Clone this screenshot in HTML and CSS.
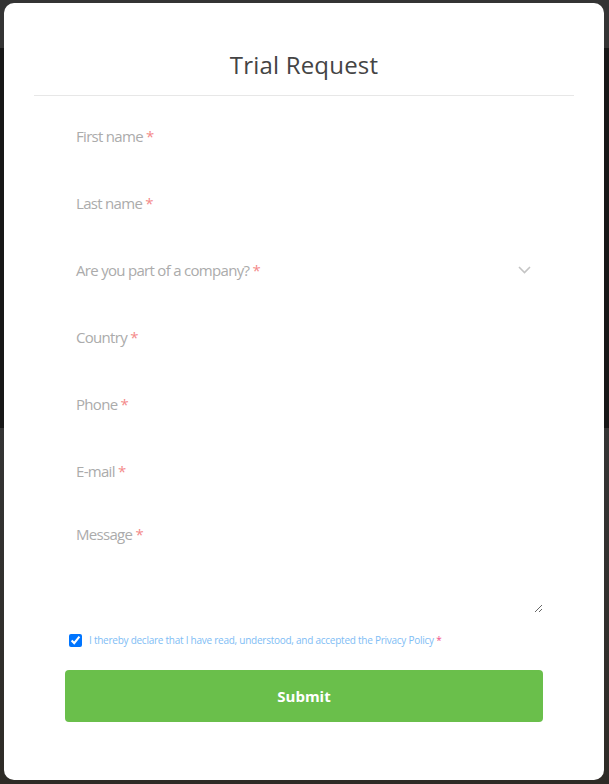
FILE: index.html
```html
<!DOCTYPE html>
<html lang="en">
<head>
<meta charset="utf-8">
<title>Trial Request</title>
<link rel="stylesheet" href="styles.css">
</head>
<body>
<div class="modal">
  <div class="modal-header">
    <h2 class="modal-title">Trial Request</h2>
  </div>
  <form class="form">
    <label class="field"><span class="label">First name <span class="req">*</span></span></label>
    <label class="field"><span class="label">Last name <span class="req">*</span></span></label>
    <label class="field field-select"><span class="label">Are you part of a company? <span class="req">*</span></span>
      <svg class="chevron" width="13" height="8" viewBox="0 0 13 8"><polyline points="1,1 6.5,6.5 12,1" fill="none" stroke="#c4c4c4" stroke-width="1.6"/></svg>
    </label>
    <label class="field"><span class="label">Country <span class="req">*</span></span></label>
    <label class="field"><span class="label">Phone <span class="req">*</span></span></label>
    <label class="field"><span class="label">E-mail <span class="req">*</span></span></label>
    <div class="field-message">
      <textarea class="message" aria-label="Message"></textarea>
      <span class="label label-over">Message <span class="req">*</span></span>
    </div>
    <label class="consent">
      <input type="checkbox" class="check" checked>
      <span class="consent-text">I thereby declare that I have read, understood, and accepted the Privacy Policy <span class="req-small">*</span></span>
    </label>
    <button type="button" class="submit">Submit</button>
  </form>
</div>
</body>
</html>
```
FILE: styles.css
```css
html, body {
  margin: 0;
  padding: 0;
}
body {
  width: 609px;
  height: 784px;
  overflow: hidden;
  background: linear-gradient(to bottom, #343434 0, #343434 48px, #171717 48px, #171717 428px, #343434 428px, #2e2b26 100%);
  font-family: "Open Sans", "Liberation Sans", sans-serif;
}
.modal {
  margin: 3px 0 0 4px;
  width: 600px;
  height: 777px;
  background: #fff;
  border-radius: 10px;
  box-sizing: border-box;
  padding: 0 30px;
}
.modal-header {
  padding: 46px 0 14px;
  border-bottom: 1px solid #e7e7e7;
  text-align: center;
}
.modal-title {
  margin: 0;
  font-weight: 400;
  font-size: 24px;
  line-height: 32px;
  color: #444;
  letter-spacing: 0.2px;
}
.form {
  padding: 6px 31px 0;
  display: flex;
  flex-direction: column;
}
.field {
  height: 67px;
  display: flex;
  align-items: center;
  padding: 0 11px;
}
.field-select {
  justify-content: space-between;
  padding-right: 12px;
}
.label {
  font-size: 15px;
  line-height: 20px;
  color: #ababab;
  letter-spacing: -0.7px;
}
.req {
  color: #f48a8a;
  letter-spacing: 0;
}
.chevron {
  display: block;
}
.field-message {
  position: relative;
  height: 109px;
}
.message {
  display: block;
  width: 100%;
  height: 109px;
  box-sizing: border-box;
  border: none;
  outline: none;
  resize: vertical;
  padding: 0;
  background: transparent;
}
.label-over {
  position: absolute;
  left: 11px;
  top: 20px;
}
.consent {
  margin-top: 15px;
  height: 24px;
  display: flex;
  align-items: center;
  padding-left: 4px;
}
.check {
  margin: 0 7px 0 0;
  width: 13px;
  height: 13px;
}
.consent-text {
  font-size: 10px;
  color: #80bdf5;
  letter-spacing: -0.25px;
}
.req-small {
  color: #f0508a;
}
.submit {
  margin-top: 18px;
  height: 52px;
  width: 100%;
  border: none;
  border-radius: 4px;
  background: #6abf4b;
  color: #fff;
  font-family: "Open Sans", "Liberation Sans", sans-serif;
  font-weight: 700;
  font-size: 15px;
}
```
